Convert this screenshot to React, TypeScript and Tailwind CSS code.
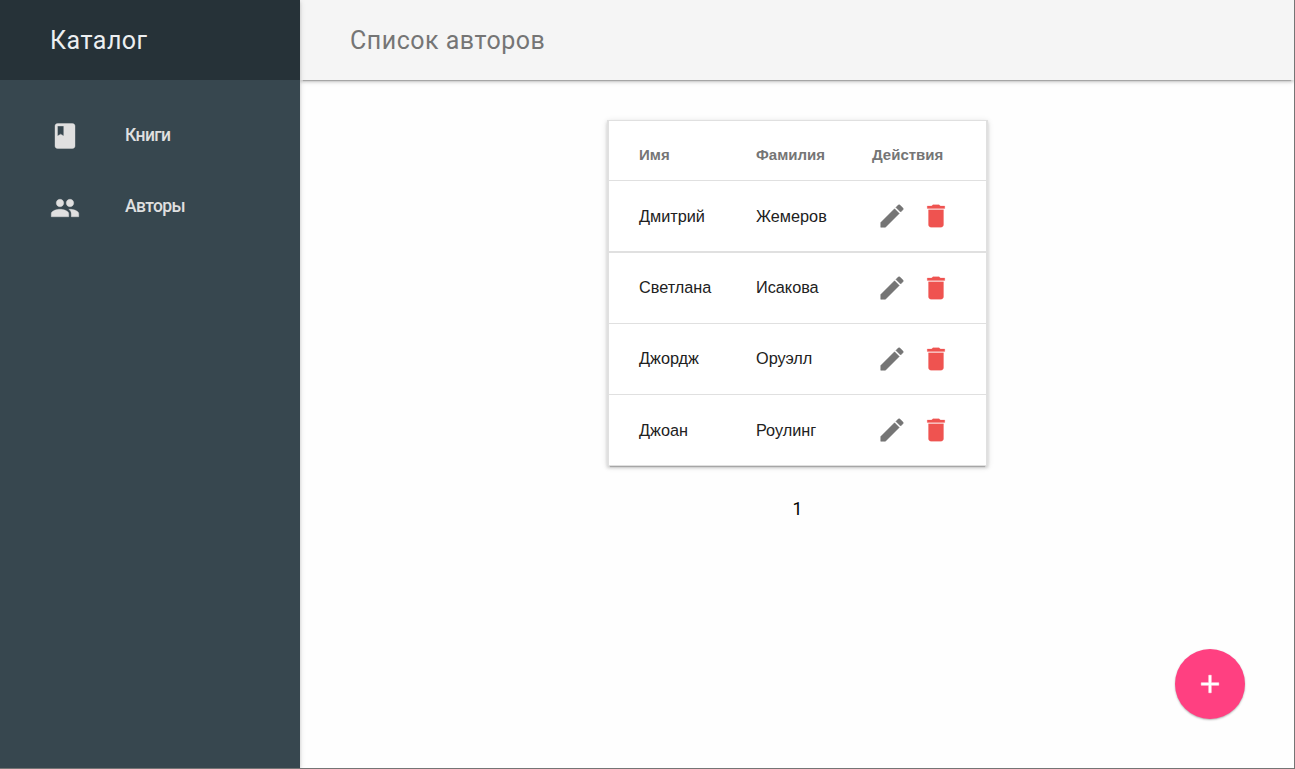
import { MdAdd, MdClass, MdDelete, MdEdit, MdPeople } from "react-icons/md";

const authors = [
  { name: "Дмитрий", surname: "Жемеров", row: "h-[72px] border-b-2", text: "pt-px" },
  { name: "Светлана", surname: "Исакова", row: "h-[71px] border-b", text: "pb-px" },
  { name: "Джордж", surname: "Оруэлл", row: "h-[71px] border-b", text: "pb-px" },
  { name: "Джоан", surname: "Роулинг", row: "h-[71px] border-b", text: "pt-px" },
];

function Sidebar() {
  return (
    <aside className="relative z-10 flex w-[300px] shrink-0 flex-col bg-[#37474f] text-[#e0e0e0] shadow-[0_2px_3px_0_rgba(0,0,0,0.14),0_4px_1px_-3px_rgba(0,0,0,0.2),0_1px_6px_0_rgba(0,0,0,0.12)]">
      <div className="flex h-20 items-center bg-[#263238] pl-[50px] pt-0.5 text-[25px] tracking-[0.5px] text-[#eceff1]">
        <span>Каталог</span>
      </div>
      <nav className="flex flex-col pt-5 text-[17.5px] font-medium tracking-[-0.6px]">
        <a className="flex h-[71px] items-center pl-[50px]">
          <MdClass className="mr-[45px] size-[30px] stroke-[0.3] [&>path:first-child]:hidden" />
          <span>Книги</span>
        </a>
        <a className="flex h-[71px] items-center pl-[50px]">
          <MdPeople className="mr-[45px] mt-0.5 size-[30px] stroke-[0.3] [&>path:first-child]:hidden" />
          <span>Авторы</span>
        </a>
      </nav>
    </aside>
  );
}

function AuthorsTable() {
  return (
    <div className="ml-px flex w-[381px] flex-col border-x-2 border-t border-[#e0e0e0] bg-white font-['Liberation_Sans',sans-serif] shadow-[0_2px_3px_0_rgba(0,0,0,0.14),0_4px_1px_-3px_rgba(0,0,0,0.2),0_1px_6px_0_rgba(0,0,0,0.12)]">
      <div className="flex h-[60px] items-center border-b border-[#e0e0e0] pl-[30px] pt-2.5 text-[15px] font-bold text-[#757575]">
        <span className="w-[117px]">Имя</span>
        <span className="w-[116px]">Фамилия</span>
        <span>Действия</span>
      </div>
      {authors.map((a) => (
        <div key={a.name} className={`flex items-center border-[#e0e0e0] pl-[30px] text-[16.25px] text-[#212121] ${a.row}`}>
          <span className={`w-[117px] ${a.text}`}>{a.name}</span>
          <span className={`w-[121px] ${a.text}`}>{a.surname}</span>
          <MdEdit className="mr-[14px] size-[30px] stroke-[0.4] text-[#757575] [&>path:first-child]:hidden" />
          <MdDelete className="size-[30px] stroke-[0.2] text-[#ef5350] [&>path:first-child]:hidden" />
        </div>
      ))}
    </div>
  );
}

export default function App() {
  return (
    <div className="flex h-[769px] w-[1295px] overflow-hidden border-b border-r border-[#757575] bg-[#fefefe] font-[Roboto,sans-serif]">
      <Sidebar />
      <div className="relative flex min-w-0 flex-1 flex-col">
        <header className="flex h-20 shrink-0 items-center bg-[#f5f5f5] pl-[50px] pt-0.5 text-[25px] tracking-[0.5px] text-[#757575] shadow-[0_2px_3px_0_rgba(0,0,0,0.14),0_4px_1px_-3px_rgba(0,0,0,0.2),0_1px_6px_0_rgba(0,0,0,0.12)]">
          <h1>Список авторов</h1>
        </header>
        <main className="flex flex-col items-center pt-10">
          <AuthorsTable />
          <div className="ml-px mt-[31px] text-[17.5px] leading-[25px] text-black">1</div>
        </main>
        <button aria-label="Добавить" className="absolute bottom-[49px] right-[49px] flex size-[70px] items-center justify-center rounded-full bg-[#ff4081] text-white shadow-[0_1px_2px_rgba(0,0,0,0.3)]">
          <MdAdd className="size-[30px] stroke-[0.4] [&>path:first-child]:hidden" />
        </button>
      </div>
    </div>
  );
}
